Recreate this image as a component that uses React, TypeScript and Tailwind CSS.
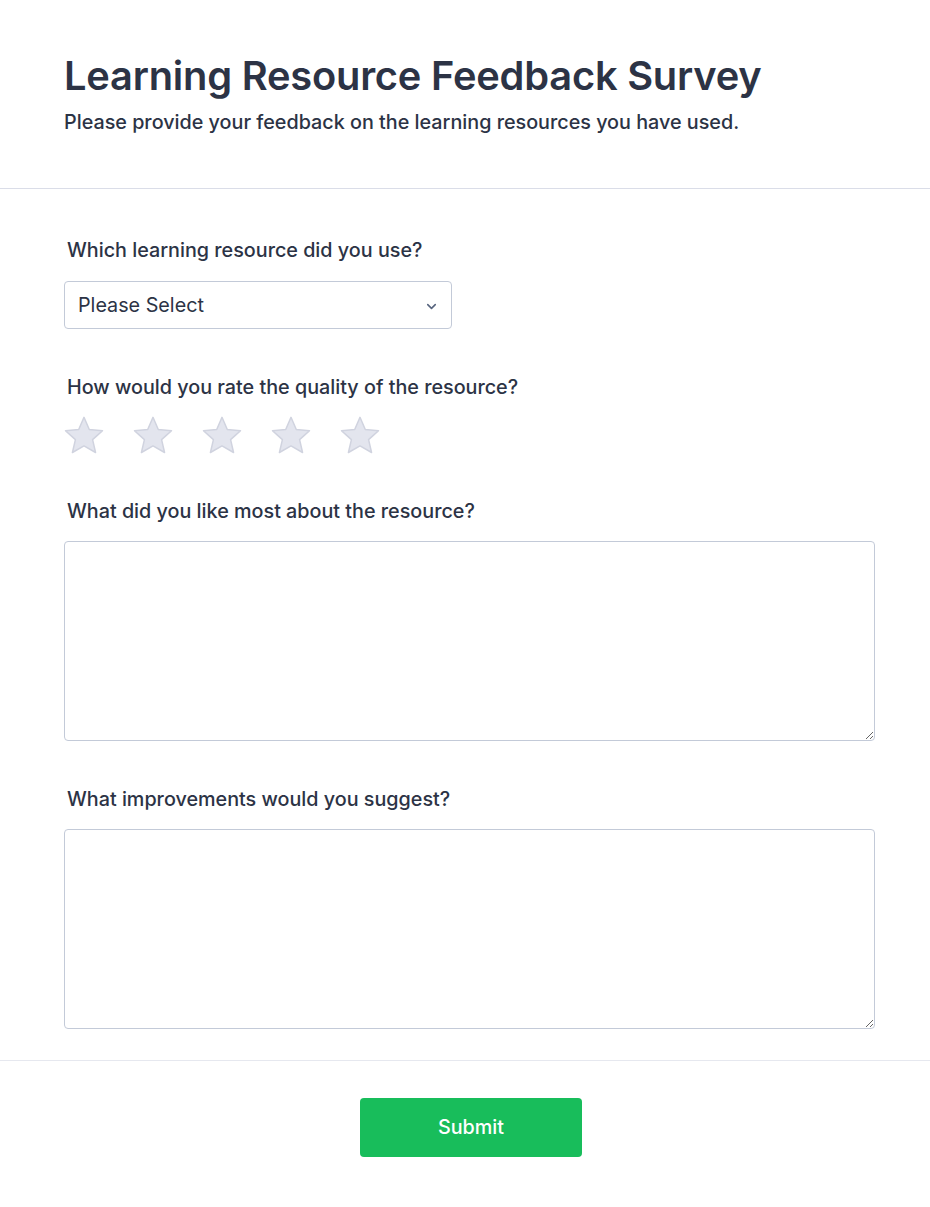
import { ChevronDown } from 'lucide-react';

function Star() {
  return (
    <svg width="40" height="38" viewBox="0 0 24 23" className="block">
      <path
        d="M12 0.8L15.2 8.2L23.2 8.9L17.2 14.3L19 22.1L12 18.1L5 22.1L6.8 14.3L0.8 8.9L8.8 8.2Z"
        fill="#e3e5ee"
        stroke="#d0d3df"
        strokeWidth="0.9"
        strokeLinejoin="round"
      />
    </svg>
  );
}

function Label({ children }: { children: string }) {
  return <label className="block pl-[3px] text-[19.75px] leading-[27px] font-medium text-[#2c3345]">{children}</label>;
}

export default function App() {
  return (
    <div className="min-h-screen bg-white text-[#2c3345]" style={{ fontFamily: 'Inter, "Noto Sans", sans-serif' }}>
      <div className="px-16 pt-[52px] pb-[52px] border-b border-[#dadde8]">
        <h1 className="text-[39.8px] leading-[48px] font-semibold tracking-[-0.2px]">Learning Resource Feedback Survey</h1>
        <p className="mt-[9px] text-[19.75px] leading-[27px] font-medium">
          Please provide your feedback on the learning resources you have used.
        </p>
      </div>

      <div className="pl-16 pr-[55px] pt-[48px] pb-[31px] border-b border-[#e6e8ef]">
        <Label>Which learning resource did you use?</Label>
        <div className="relative mt-[17px] w-[388px] h-12 border border-[#c3cad8] rounded-[4px] flex items-center px-[13px] pt-[2px]">
          <span className="text-[19.75px] text-[#2c3345]">Please Select</span>
          <ChevronDown className="absolute right-[12px] top-[17px] w-[15px] h-[15px] text-[#57647e]" strokeWidth={2.5} />
        </div>

        <div className="mt-[45px]">
          <Label>How would you rate the quality of the resource?</Label>
        </div>
        <div className="mt-[15px] flex gap-[29px]">
          <Star />
          <Star />
          <Star />
          <Star />
          <Star />
        </div>

        <div className="mt-[44px]">
          <Label>What did you like most about the resource?</Label>
        </div>
        <textarea className="mt-[16px] w-full h-[200px] border border-[#c3cad8] rounded-[4px] block outline-none" />

        <div className="mt-[45px]">
          <Label>What improvements would you suggest?</Label>
        </div>
        <textarea className="mt-[16px] w-full h-[200px] border border-[#c3cad8] rounded-[4px] block outline-none" />
      </div>

      <div className="flex justify-center pl-[12px] pt-[37px] pb-[50px]">
        <button className="w-[222px] h-[59px] rounded-[4px] bg-[#18bd5b] text-white text-[19.75px] font-medium">
          Submit
        </button>
      </div>
    </div>
  );
}
